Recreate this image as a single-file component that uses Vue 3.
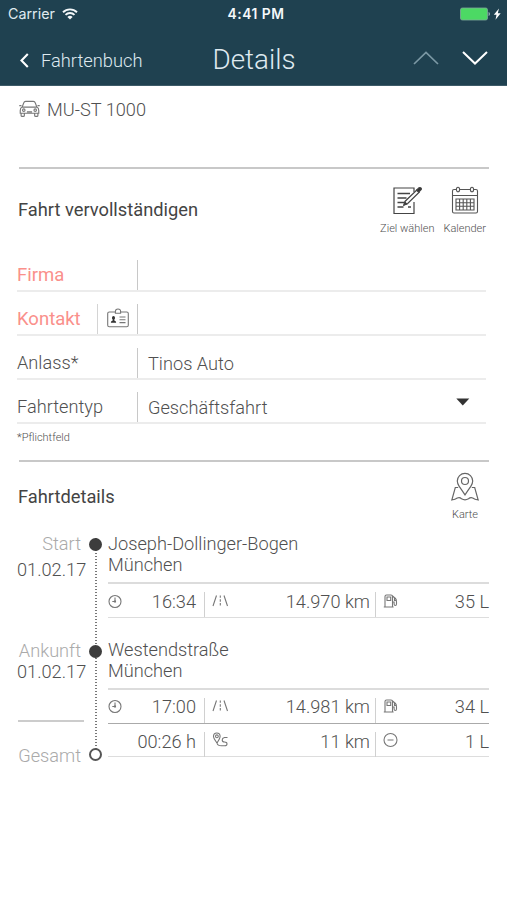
<template>
  <div class="screen">
    <header class="header">
      <div class="status-bar">
        <div class="carrier">
          <span>Carrier</span>
          <svg width="16" height="12" viewBox="0 0 16 12" fill="none" stroke="#f4f8fa" stroke-width="1.9">
            <path d="M1 4.2a10 10 0 0 1 14 0M3.5 6.9a6.4 6.4 0 0 1 9 0" />
            <path d="M8 11.6 5.4 9a3.7 3.7 0 0 1 5.2 0z" fill="#f4f8fa" stroke="none" />
          </svg>
        </div>
        <div class="clock">4:41 PM</div>
        <div class="battery">
          <svg width="42" height="14" viewBox="0 0 42 14">
            <rect x="0.5" y="1" width="27" height="12" rx="1.8" fill="#4cd964" stroke="#7fa99a" stroke-width="0.8" />
            <path d="M28.6 5v4c1.6-.4 1.6-3.6 0-4z" fill="#a9c4c4" />
            <path d="M39 1.500 33.800 7.800h2.700l-1 5 5.200-6.600h-2.900z" fill="#fff" />
          </svg>
        </div>
      </div>
      <nav class="nav">
        <a class="back">
          <svg width="9" height="15" viewBox="0 0 9 15" fill="none" stroke="#fff" stroke-width="2.1">
            <path d="M7.8 1 1.5 7.5l6.300 6.500" />
          </svg>
          <span>Fahrtenbuch</span>
        </a>
        <h1 class="title">Details</h1>
        <div class="arrows">
          <svg width="26" height="14" viewBox="0 0 26 14" fill="none" stroke="#7b98a4" stroke-width="1.7">
            <path d="M1 13 13 1.500 25 13" />
          </svg>
          <svg width="26" height="14" viewBox="0 0 26 14" fill="none" stroke="#fff" stroke-width="2">
            <path d="M1 1l12 11.500L25 1" />
          </svg>
        </div>
      </nav>
    </header>

    <section class="vehicle">
      <svg width="22" height="18" viewBox="0 0 22 18" fill="none" stroke="#777" stroke-width="1.2">
        <path d="M3.3 7 5 2.500Q5.500 1 7 1h8q1.500 0 2 1.500L18.700 7M3.300 7h15.400q2 1 2 3.500v3H1.300v-3Q1.300 8 3.300 7zM2.200 13.500v2.200q0 1.100 1.100 1.100h1.200q1.100 0 1.100-1.100v-2.200M16.400 13.500v2.200q0 1.100 1.100 1.100h1.200q1.100 0 1.100-1.100v-2.200M.3 5.500h2.300M19.400 5.500h2.300M8.300 12h5.400" />
        <circle cx="5" cy="10.2" r="1.3" />
        <circle cx="17" cy="10.2" r="1.3" />
      </svg>
      <span>MU-ST 1000</span>
    </section>

    <section class="complete">
      <div class="section-head">
        <h2>Fahrt vervollständigen</h2>
        <div class="actions">
          <div class="action target">
            <svg width="30" height="30" viewBox="0 0 30 30" fill="none" stroke="#444" stroke-width="1.2">
              <path d="M22 7V3H2v25.500h20V17" />
              <path d="M5.500 8.500H18M5.500 13h9M5.500 17.500H12M5.500 22h6M16 22h3" stroke-width="1.3" />
              <path d="m12 20 1.200-3.800L25 4.800l2.200 2.400-11.500 11.300z" fill="#fff" />
              <path d="m24.500 5.200 2.500-2.400q1.200-.7 2 .2.800 1-.1 1.900l-2.200 2.200z" fill="#333" />
              <path d="m12 20 .9-2.800 1.800 1.900z" fill="#333" />
            </svg>
            <span>Ziel wählen</span>
          </div>
          <div class="action">
            <svg width="28" height="30" viewBox="0 0 28 30" fill="none" stroke="#555" stroke-width="1.1">
              <path d="M5.500 4.500H3q-1.500 0-1.500 1.500v20.500Q1.500 28 3 28h22q1.500 0 1.500-1.500V6q0-1.500-1.500-1.500h-2.500M8.500 4.500h11M1.500 10.500h25" />
              <ellipse cx="7" cy="4.500" rx="1.600" ry="2.300" />
              <ellipse cx="21" cy="4.500" rx="1.600" ry="2.300" />
              <path d="M5 14h18v11H5zM5 17.700h18M5 21.300h18M8.600 14v11M12.200 14v11M15.800 14v11M19.400 14v11" />
            </svg>
            <span>Kalender</span>
          </div>
        </div>
      </div>

      <div v-for="field in fields" :key="field.label" class="field">
        <label :class="{ missing: field.missing }">{{ field.label }}</label>
        <div v-if="field.card" class="card-button">
          <svg width="22" height="20" viewBox="0 0 22 20" fill="none" stroke="#777" stroke-width="1.1">
            <path d="M8 4H2.300Q.7 4 .7 5.600v11.600q0 1.600 1.600 1.600h17.400q1.600 0 1.600-1.600V5.600Q21.300 4 19.700 4H14" />
            <path d="M8.400 5.300h5.200V3.500Q13.600 1 11 1T8.400 3.500z" />
            <path d="M12.500 9h6M12.500 11.800h6M12.500 14.600h6" />
            <path d="M6.500 8q1.500 0 1.500 1.700 0 1.300-.7 1.900v1q1.900.3 1.900 2.200H3.800q0-1.900 1.900-2.200v-1Q5 11 5 9.700 5 8 6.500 8z" fill="#333" stroke="none" />
          </svg>
        </div>
        <div class="value">{{ field.value }}</div>
        <svg v-if="field.select" class="caret" width="14" height="8" viewBox="0 0 14 8">
          <path d="M.3.500h13L6.800 7.500z" fill="#333" />
        </svg>
      </div>
      <p class="hint">*Pflichtfeld</p>
    </section>

    <section class="details">
      <div class="section-head details-head">
        <h2>Fahrtdetails</h2>
        <div class="action map">
          <svg width="28" height="30" viewBox="0 0 28 30" fill="none" stroke="#666" stroke-width="1.2">
            <path d="M14 22.800Q11.500 19 8.200 14.300 6.300 11.600 6.300 9a7.700 7.700 0 0 1 15.400 0q0 2.600-1.900 5.300Q16.500 19 14 22.800z" />
            <circle cx="14" cy="9" r="3.5" />
            <path d="M7.200 15.500H4.300L.8 28q3.500-.5 5.500-2 2.500-1 4.200.8 3.500 2 7 0 2-1.800 4.200-.8 2 1.500 5.500 2L23.700 15.500h-2.900" />
          </svg>
          <span>Karte</span>
        </div>
      </div>

      <div class="timeline">
        <div class="rail">
          <i class="dot start"></i>
          <i class="dot arrival"></i>
          <i class="dot total"></i>
        </div>
        <div class="labels">
          <div class="stop-label first">
            <span>Start</span>
            <time>01.02.17</time>
          </div>
          <div class="stop-label second">
            <span>Ankunft</span>
            <time>01.02.17</time>
          </div>
          <div class="stop-label sum">
            <span>Gesamt</span>
          </div>
        </div>
        <div class="stops">
          <article v-for="stop in stops" :key="stop.street" class="stop">
            <address>{{ stop.street }}<br />{{ stop.city }}</address>
            <div v-for="(row, i) in stop.rows" :key="i" class="metrics" :class="{ total: i === 1 }">
              <div v-for="cell in row" :key="cell.text" class="cell">
                <svg v-if="cell.icon" width="18" height="16" viewBox="0 0 18 16" fill="none" stroke="#777" stroke-width="1.1">
                  <path :d="icons[cell.icon]" />
                </svg>
                <span>{{ cell.text }}</span>
              </div>
            </div>
          </article>
        </div>
      </div>
    </section>
  </div>
</template>

<script setup>
const fields = [
  { label: 'Firma', value: '', missing: true },
  { label: 'Kontakt', value: '', missing: true, card: true },
  { label: 'Anlass*', value: 'Tinos Auto' },
  { label: 'Fahrtentyp', value: 'Geschäftsfahrt', select: true }
]

const icons = {
  clock: 'M1 8.500a6 6 0 1 0 12 0a6 6 0 1 0-12 0M7 4.500v4H4.300M6.500 8h1v1h-1z',
  road: 'M4.500 2.500 1 13M12 2.500 15.500 13M8.300 2.500v2.300M8.300 6.200v2.500M8.300 10V12.500',
  fuel: 'M2 14V3.500Q2 2 3.500 2H8q1.500 0 1.500 1.500V14M.8 14h9.800M4 4h3.700v3.500H4zM9.500 3l3 2.500q1 1 1 3.500v2q0 1.500-1.200 1.500t-1.200-1.500V9H9.500M11.500 5v2.500h1.800',
  route: 'M5 11Q1.500 6.500 1.500 4.300a3.300 3.300 0 0 1 6.600 0Q8.100 6.500 5 11zM3.500 4.300a1.400 1.400 0 1 0 2.800 0a1.400 1.400 0 1 0-2.800 0M5 11q.5 2.800 4.500 2.800H12.500q2.500 0 2.500-1.900T12.500 10q-2.300 0-2.300-2T12.500 5.500H15.500',
  minus: 'M1 8a6.500 6.500 0 1 0 13 0a6.500 6.500 0 1 0-13 0M4.500 8h6'
}

const stops = [
  {
    street: 'Joseph-Dollinger-Bogen',
    city: 'München',
    rows: [
      [
        { icon: 'clock', text: '16:34' },
        { icon: 'road', text: '14.970 km' },
        { icon: 'fuel', text: '35 L' }
      ]
    ]
  },
  {
    street: 'Westendstraße',
    city: 'München',
    rows: [
      [
        { icon: 'clock', text: '17:00' },
        { icon: 'road', text: '14.981 km' },
        { icon: 'fuel', text: '34 L' }
      ],
      [
        { text: '00:26 h' },
        { icon: 'route', text: '11 km' },
        { icon: 'minus', text: '1 L' }
      ]
    ]
  }
]
</script>

<style>
body {
  margin: 0;
  background: #fff;
}
</style>

<style scoped>
.screen {
  width: 507px;
  height: 900px;
  overflow: hidden;
  background: #fff;
  color: #505050;
  font-family: Roboto, "Liberation Sans", sans-serif;
  font-weight: 300;
  font-size: 18.2px;
}

.screen * {
  box-sizing: border-box;
}

svg {
  display: block;
  flex: none;
}

h1,
h2,
p {
  margin: 0;
}

.header {
  height: 86px;
  background: #1f4150;
  border-bottom: 1px solid #3d5b68;
  color: #dfeaf0;
}

.status-bar {
  display: grid;
  grid-template-columns: 1fr auto 1fr;
  align-items: center;
  height: 27px;
  padding: 0 5px 0 8px;
  font-family: Inter, "Liberation Sans", sans-serif;
  font-size: 14.3px;
  font-weight: 400;
}

.carrier {
  display: flex;
  align-items: center;
  gap: 7px;
}

.clock {
  padding-left: 2px;
  font-size: 13.8px;
  font-weight: 600;
  letter-spacing: 0.5px;
  color: #f4f8fa;
}

.battery {
  justify-self: end;
}

.nav {
  display: grid;
  grid-template-columns: 1fr auto 1fr;
  align-items: center;
  height: 64px;
  padding: 0 19px 0 20px;
}

.back {
  display: flex;
  align-items: center;
  gap: 12px;
  padding-top: 3px;
  font-size: 18.3px;
}

.title {
  font-size: 27.8px;
  font-weight: 300;
}

.arrows {
  display: flex;
  justify-content: flex-end;
  gap: 23px;
}

.arrows svg {
  position: relative;
  top: -1px;
}

.vehicle {
  display: flex;
  gap: 7px;
  height: 83px;
  margin: 0 18px 0 19px;
  padding-top: 13px;
  border-bottom: 2px solid #c8c8c8;
  line-height: 21px;
}

.vehicle svg {
  width: 21px;
  margin-top: 1px;
}

.section-head {
  display: flex;
  justify-content: space-between;
  height: 79px;
  padding: 16px 21px 0 18px;
}

h2 {
  font-size: 18.3px;
  font-weight: 400;
  line-height: 22px;
  color: #444;
  margin-top: 14px;
}

.actions {
  display: flex;
  gap: 9px;
}

.action {
  display: flex;
  flex-direction: column;
  align-items: center;
  gap: 7px;
  font-size: 11px;
  line-height: 13px;
}

.target svg {
  margin-right: 1px;
}

.field {
  display: flex;
  align-items: flex-end;
  height: 44px;
  margin: 0 21px 0 17px;
  border-bottom: 2px solid #ececec;
}

.field label {
  flex: 0 0 120px;
  height: 30px;
  line-height: 29px;
}

.field label.missing {
  color: #fa908b;
  font-size: 18.5px;
  font-weight: 400;
  line-height: 31px;
}

.card-button {
  display: flex;
  align-items: center;
  justify-content: center;
  width: 40px;
  height: 30px;
  margin-left: -40px;
  padding-bottom: 2px;
  border-left: 1px solid #d4d4d4;
}

.value {
  flex: 1;
  height: 30px;
  padding-left: 10px;
  border-left: 1px solid #c8c8c8;
  line-height: 31px;
}

.caret {
  margin: 0 16px 16px 0;
}

.hint {
  height: 38px;
  margin: 0 18px 0 19px;
  border-bottom: 2px solid #c8c8c8;
  text-indent: -2px;
  font-size: 11px;
  line-height: 28px;
}

.details-head {
  height: 71px;
  padding: 10px 28px 0 18px;
}

.action.map {
  gap: 6px;
}

.timeline {
  display: grid;
  grid-template-columns: 71px 20px 381px;
  padding-left: 17px;
}

.rail {
  grid-column: 2;
  grid-row: 1;
  display: flex;
  flex-direction: column;
  align-items: center;
  justify-self: center;
  width: 14px;
  height: 217px;
  margin: 5px 5px 0 0;
  background: repeating-linear-gradient(#777 0 1.5px, transparent 1.5px 3px) center / 2px 100% no-repeat;
}

.dot {
  flex: none;
  width: 13px;
  height: 13px;
  border-radius: 50%;
  background: #3d3d3d;
}

.arrival {
  margin-top: 94px;
}

.dot.total {
  margin-top: 90px;
  border: 2px solid #555;
  background: #fff;
}

.labels {
  grid-column: 1;
  grid-row: 1;
}

.stop-label {
  display: flex;
  flex-direction: column;
}

.stop-label span {
  align-self: flex-end;
  margin-right: 7px;
  line-height: 21px;
  color: #aaa;
}

.stop-label time {
  line-height: 21px;
}

.first {
  height: 107px;
  gap: 5px;
}

.first time {
  line-height: 21px;
}

.second {
  height: 82px;
  margin: 0 4px 0 1px;
  border-bottom: 2px solid #ccc;
}

.second span {
  margin-right: 3px;
  line-height: 22px;
}

.second time {
  margin-left: -1px;
  line-height: 20px;
}

.sum {
  padding-top: 23px;
}

.stops {
  grid-column: 3;
  grid-row: 1;
}

.stop + .stop {
  margin-top: 21px;
}

address {
  height: 51px;
  border-bottom: 2px solid #dcdcdc;
  font-style: normal;
  line-height: 21px;
}

.metrics {
  display: grid;
  grid-template-columns: 96px 171px 114px;
  height: 34px;
  border-bottom: 1px solid #ddd;
}

.metrics.total {
  height: 33px;
}

.metrics:has(+ .total) {
  border-color: #aaa;
}

.cell {
  display: flex;
  align-items: flex-start;
  height: 25px;
  margin-top: 8px;
  line-height: 20px;
}

.cell span {
  margin: 0 8px 0 auto;
}

.cell svg {
  margin-top: 1px;
}

.metrics:has(+ .total) .cell {
  line-height: 18px;
}

.metrics.total .cell {
  line-height: 19px;
}

.stop + .stop .cell svg {
  margin-top: 0;
}

.cell + .cell {
  padding-left: 7px;
  border-left: 1px solid #d0d0d0;
}

.cell:nth-child(2) span {
  margin-right: 5px;
}

.cell:last-child span {
  margin-right: 0;
}
</style>
